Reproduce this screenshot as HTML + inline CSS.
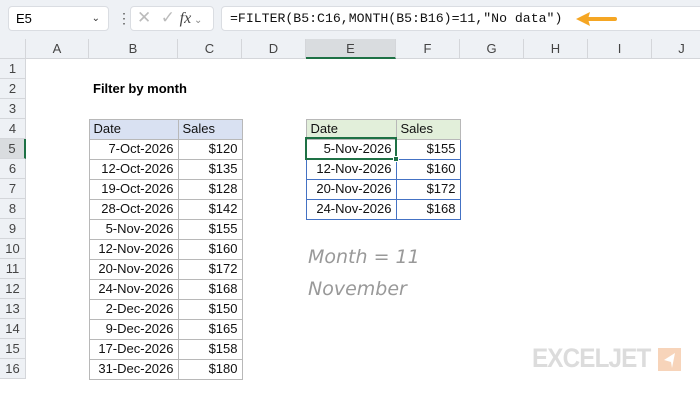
<!DOCTYPE html>
<html><head><style>
*{margin:0;padding:0;box-sizing:border-box}
body{width:700px;height:400px;overflow:hidden;background:#fff;font-family:"Liberation Sans",sans-serif;position:relative}
.top{position:absolute;left:0;top:0;width:700px;height:39px;background:#eef1f5}
.box{position:absolute;background:#fff;border:1px solid #dadde2;border-radius:4px}
.mono{font-family:"Liberation Mono",monospace}
.ch{position:absolute;top:39px;height:20px;background:#eef1f5;border-right:1px solid #d4d6da;border-bottom:1px solid #d4d6da;font-size:13px;color:#444;text-align:center;line-height:20px}
.rh{position:absolute;left:0;width:26px;height:20px;background:#eef1f5;border-bottom:1px solid #d4d6da;border-right:1px solid #d4d6da;font-size:13px;color:#444;text-align:center;line-height:20px}
table{position:absolute;border-collapse:collapse;font-size:13px;color:#111}
td{height:20px;padding:0 4px;border:1px solid #b8b8b8;text-align:right;white-space:nowrap;line-height:18px}
tr.h td{text-align:left}
.t2 td{border-color:#4472c4}
</style></head><body>
<div class="top"></div>
<div class="box" style="left:8px;top:6px;width:101px;height:25px;font-size:13px;line-height:23px;padding-left:7px">E5<span style="position:absolute;right:8px;top:0;font-size:10px;color:#333">&#8964;</span></div>
<div style="position:absolute;left:117px;top:10px;font-size:14px;color:#555">&#8942;</div>
<div class="box" style="left:130px;top:6px;width:84px;height:25px;color:#bbb;font-size:17px;line-height:22px;padding-left:6px">&#10005;&nbsp;&nbsp;&#10003; <i style="font-family:'Liberation Serif',serif;color:#444;font-size:16px">fx</i><span style="font-size:10px;color:#888"> &#8964;</span></div>
<div class="box mono" style="left:221px;top:6px;width:490px;height:25px;font-size:13.2px;line-height:23px;padding-left:8px;color:#111">=FILTER(B5:C16,MONTH(B5:B16)=11,"No data")</div>
<svg style="position:absolute;left:574px;top:11px" width="44" height="16"><path d="M8 8H41" stroke="#f5a623" stroke-width="4" stroke-linecap="round"/><path d="M2 8L16 1L14 8L16 15Z" fill="#f5a623"/></svg>
<div class="ch" style="left:0;width:26px"></div>
<div class="ch" style="left:26px;width:63px">A</div>
<div class="ch" style="left:89px;width:89px">B</div>
<div class="ch" style="left:178px;width:64px">C</div>
<div class="ch" style="left:242px;width:64px">D</div>
<div class="ch" style="left:306px;width:90px;background:#d9dcdf;border-bottom:2px solid #1e7145">E</div>
<div class="ch" style="left:396px;width:64px">F</div>
<div class="ch" style="left:460px;width:64px">G</div>
<div class="ch" style="left:524px;width:64px">H</div>
<div class="ch" style="left:588px;width:64px">I</div>
<div class="ch" style="left:652px;width:60px">J</div>
<div class="rh" style="top:59px">1</div><div class="rh" style="top:79px">2</div><div class="rh" style="top:99px">3</div><div class="rh" style="top:119px">4</div>
<div class="rh" style="top:139px;background:#d9dcdf;border-right:2px solid #1e7145">5</div>
<div class="rh" style="top:159px">6</div><div class="rh" style="top:179px">7</div><div class="rh" style="top:199px">8</div><div class="rh" style="top:219px">9</div><div class="rh" style="top:239px">10</div><div class="rh" style="top:259px">11</div><div class="rh" style="top:279px">12</div><div class="rh" style="top:299px">13</div><div class="rh" style="top:319px">14</div><div class="rh" style="top:339px">15</div><div class="rh" style="top:359px">16</div>
<div style="position:absolute;left:93px;top:79px;line-height:20px;font-size:13px;font-weight:bold">Filter by month</div>
<table style="left:88.5px;top:118.5px">
<colgroup><col style="width:89px"><col style="width:64px"></colgroup>
<tr class="h" style="background:#d9e1f2"><td>Date</td><td>Sales</td></tr>
<tr><td>7-Oct-2026</td><td>$120</td></tr>
<tr><td>12-Oct-2026</td><td>$135</td></tr>
<tr><td>19-Oct-2026</td><td>$128</td></tr>
<tr><td>28-Oct-2026</td><td>$142</td></tr>
<tr><td>5-Nov-2026</td><td>$155</td></tr>
<tr><td>12-Nov-2026</td><td>$160</td></tr>
<tr><td>20-Nov-2026</td><td>$172</td></tr>
<tr><td>24-Nov-2026</td><td>$168</td></tr>
<tr><td>2-Dec-2026</td><td>$150</td></tr>
<tr><td>9-Dec-2026</td><td>$165</td></tr>
<tr><td>17-Dec-2026</td><td>$158</td></tr>
<tr><td>31-Dec-2026</td><td>$180</td></tr>
</table>
<table style="left:305.5px;top:118.5px" class="t2">
<colgroup><col style="width:90px"><col style="width:64px"></colgroup>
<tr class="h" style="background:#e2efda"><td style="border-color:#b8b8b8">Date</td><td style="border-color:#b8b8b8">Sales</td></tr>
<tr><td>5-Nov-2026</td><td>$155</td></tr>
<tr><td>12-Nov-2026</td><td>$160</td></tr>
<tr><td>20-Nov-2026</td><td>$172</td></tr>
<tr><td>24-Nov-2026</td><td>$168</td></tr>
</table>
<div style="position:absolute;left:305px;top:137px;width:92px;height:23px;border:2px solid #1e7145"></div>
<div style="position:absolute;left:393px;top:156px;width:6px;height:6px;background:#1e7145;border:1px solid #fff"></div>
<div style="position:absolute;left:308px;top:241px;font-family:'Comic Sans MS','DejaVu Sans',sans-serif;font-size:19px;color:#999;line-height:32px;font-style:italic">Month = 11<br>November</div>
<div style="position:absolute;left:532px;top:343px;font-size:27px;font-weight:bold;color:#dcdcdc;letter-spacing:-1px;transform:scaleX(0.9);transform-origin:left">EXCELJET</div>
<div style="position:absolute;left:658px;top:348px;width:23px;height:23px;background:#f7d4ba"><svg width="23" height="23"><path d="M17 5L6 12L13 14L14 20Z" fill="#fff"/></svg></div>
</body></html>
